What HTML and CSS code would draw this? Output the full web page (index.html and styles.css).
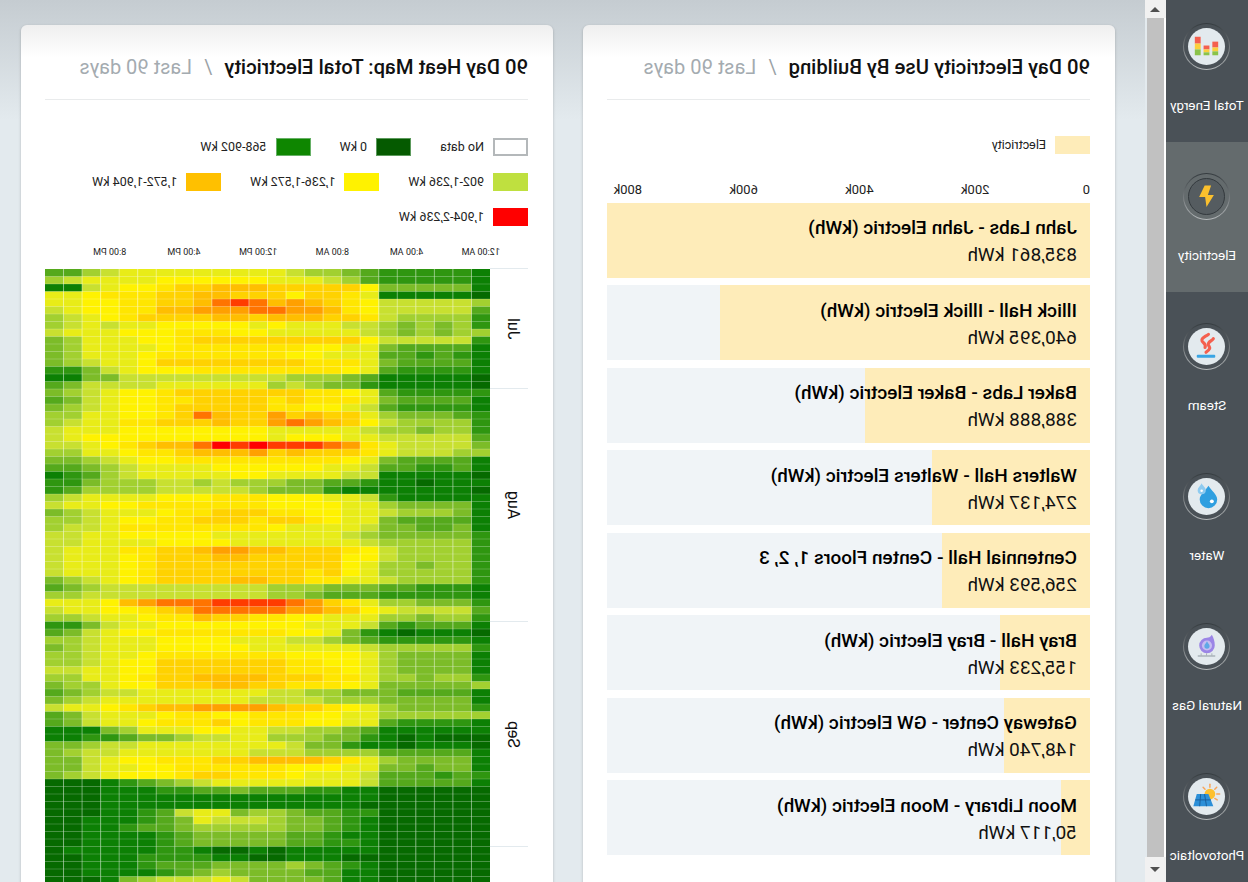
FILE: index.html
```html
<!DOCTYPE html>
<html lang="en">
<head>
<meta charset="utf-8">
<title>Energy dashboard</title>
<link rel="stylesheet" href="styles.css">
</head>
<body>
<div class="app">
  <aside class="sidebar">
    <a class="nav-item first">
      <span class="ring"><span class="ring-gap"><span class="disc">
        <svg class="icon" viewBox="0 0 38 38">
          <rect x="25" y="9" width="6" height="7" fill="#f4604f"/><rect x="25" y="16" width="6" height="6" fill="#fcd03c"/><rect x="25" y="22" width="6" height="6" fill="#8bc34a"/>
          <rect x="16" y="18" width="6" height="4" fill="#f4604f"/><rect x="16" y="22" width="6" height="3" fill="#fcd03c"/><rect x="16" y="25" width="6" height="3" fill="#8bc34a"/>
          <rect x="7" y="14" width="6" height="6" fill="#f4604f"/><rect x="7" y="20" width="6" height="4" fill="#fcd03c"/><rect x="7" y="24" width="6" height="4" fill="#8bc34a"/>
        </svg>
      </span></span></span>
      <span class="nav-label">Total Energy</span>
    </a>
    <a class="nav-item active">
      <span class="ring"><span class="ring-gap"><span class="disc">
        <svg class="icon" viewBox="0 0 38 38">
          <polygon points="21,7 27,19.500 20.500,19.500 19,30.500 11,17.500 17.500,17.500 14,7" fill="#fbc02d"/>
        </svg>
      </span></span></span>
      <span class="nav-label">Electricity</span>
    </a>
    <a class="nav-item">
      <span class="ring"><span class="ring-gap"><span class="disc">
        <svg class="icon" viewBox="0 0 38 38">
          <path d="M17 6.500C20 9 25 10 23.500 13.500C22.500 15.500 19 16 20.500 20" fill="none" stroke="#f4604f" stroke-width="3.200" stroke-linecap="round"/>
          <path d="M12 11C13.500 13.500 18 14 17 17.500C16 20 13.500 20.500 19.500 25" fill="none" stroke="#f4604f" stroke-width="3.200" stroke-linecap="round"/>
          <rect x="10" y="27.500" width="19" height="3" rx="1" fill="#3aa5e4"/>
        </svg>
      </span></span></span>
      <span class="nav-label">Steam</span>
    </a>
    <a class="nav-item">
      <span class="ring"><span class="ring-gap"><span class="disc">
        <svg class="icon" viewBox="0 0 38 38">
          <path d="M17 8C14 13 8 17 8 22a9 9 0 0 0 18 0C26 17 20 13 17 8Z" fill="#2f9fe0"/>
          <circle cx="13.500" cy="24" r="2" fill="#fff"/>
          <path d="M24 5.500C23 8 19.700 10 19.700 12.500a4.200 4.200 0 0 0 8.400 0C28.100 10 25 8 24 5.500Z" fill="#8ecbf0"/>
          <circle cx="24" cy="13" r="1.300" fill="#fff"/>
        </svg>
      </span></span></span>
      <span class="nav-label">Water</span>
    </a>
    <a class="nav-item">
      <span class="ring"><span class="ring-gap"><span class="disc">
        <svg class="icon" viewBox="0 0 38 38">
          <path d="M13.500 7C15 9.500 17 10 18.500 10A8 8 0 1 1 10.500 18C10.500 14 11.500 10.500 13.500 7Z" fill="#9b85e6"/>
          <circle cx="18.500" cy="18" r="5.200" fill="#c6bdf1"/>
          <path d="M18.500 13.500C17.800 15.500 15.800 16.500 15.800 18.500a2.700 2.700 0 0 0 5.400 0C21.200 16.500 19.200 15.500 18.500 13.500Z" fill="#5fa8e6"/>
          <rect x="10" y="28" width="18" height="1.500" fill="#a9b2b8"/>
          <rect x="13" y="26" width="1" height="2.500" fill="#a9b2b8"/><rect x="18.500" y="26" width="1" height="2.500" fill="#a9b2b8"/><rect x="24" y="26" width="1" height="2.500" fill="#a9b2b8"/>
        </svg>
      </span></span></span>
      <span class="nav-label">Natural Gas</span>
    </a>
    <a class="nav-item">
      <span class="ring"><span class="ring-gap"><span class="disc">
        <svg class="icon" viewBox="0 0 38 38">
          <g stroke="#f8a55a" stroke-width="1.500" stroke-linecap="round">
            <path d="M15.500 6.500V9.500"/><path d="M8.500 9.500L10.500 11.500"/><path d="M5.500 16.500H8.500"/><path d="M8 22.500L10.500 21"/><path d="M22.500 9.500L20.500 11.500"/>
          </g>
          <circle cx="15.500" cy="16.500" r="5.500" fill="#fdc02d"/>
          <polygon points="17,16.500 29,16.500 32.500,29 12,29" fill="#2b8fd8"/>
          <g stroke="#185f9c" stroke-width="1" fill="none">
            <path d="M14.500 22.500H30.500"/><path d="M21 16.500L19 29"/><path d="M25 16.500L26 29"/>
          </g>
        </svg>
      </span></span></span>
      <span class="nav-label">Photovoltaic</span>
    </a>
  </aside>

  <div class="scrollbar">
    <div class="sb-btn sb-up"><span class="arrow-up"></span></div>
    <div class="sb-track"><div class="sb-white"></div><div class="sb-thumb"></div></div>
    <div class="sb-btn sb-down"><span class="arrow-down"></span></div>
  </div>

  <main class="main">
    <section class="card">
      <header class="card-head">
        <h2 class="card-title">90 Day Electricity Use By Building</h2>
        <span class="sep">/</span>
        <span class="sub">Last 90 days</span>
      </header>
      <div class="legend-single"><span class="swatch bar-swatch"></span><span class="legend-text">Electricity</span></div>
      <div class="axis">
        <span class="tick tick-zero">0</span><span class="tick">200k</span><span class="tick">400k</span><span class="tick">600k</span><span class="tick">800k</span>
      </div>
      <div class="bars">
        <div class="bar"><div class="fill" style="width:100%"></div><div class="bar-text"><div class="bar-name">Jahn Labs - Jahn Electric (kWh)</div><div class="bar-val">835,861 kWh</div></div></div>
        <div class="bar"><div class="fill" style="width:76.61%"></div><div class="bar-text"><div class="bar-name">Illick Hall - Illick Electric (kWh)</div><div class="bar-val">640,395 kWh</div></div></div>
        <div class="bar"><div class="fill" style="width:46.52%"></div><div class="bar-text"><div class="bar-name">Baker Labs - Baker Electric (kWh)</div><div class="bar-val">388,888 kWh</div></div></div>
        <div class="bar"><div class="fill" style="width:32.8%"></div><div class="bar-text"><div class="bar-name">Walters Hall - Walters Electric (kWh)</div><div class="bar-val">274,137 kWh</div></div></div>
        <div class="bar"><div class="fill" style="width:30.7%"></div><div class="bar-text"><div class="bar-name">Centennial Hall - Centen Floors 1, 2, 3</div><div class="bar-val">256,593 kWh</div></div></div>
        <div class="bar"><div class="fill" style="width:18.57%"></div><div class="bar-text"><div class="bar-name">Bray Hall - Bray Electric (kWh)</div><div class="bar-val">155,233 kWh</div></div></div>
        <div class="bar"><div class="fill" style="width:17.79%"></div><div class="bar-text"><div class="bar-name">Gateway Center - GW Electric (kWh)</div><div class="bar-val">148,740 kWh</div></div></div>
        <div class="bar"><div class="fill" style="width:6%"></div><div class="bar-text"><div class="bar-name">Moon Library - Moon Electric (kWh)</div><div class="bar-val">50,117 kWh</div></div></div>
      </div>
    </section>

    <section class="card">
      <header class="card-head">
        <h2 class="card-title">90 Day Heat Map: Total Electricity</h2>
        <span class="sep">/</span>
        <span class="sub">Last 90 days</span>
      </header>
      <div class="legend">
        <div class="legend-row">
          <div class="legend-item"><span class="swatch s-none"></span><span class="legend-text">No data</span></div>
          <div class="legend-item"><span class="swatch s-zero"></span><span class="legend-text">0 kW</span></div>
          <div class="legend-item"><span class="swatch s-low"></span><span class="legend-text">568-902 kW</span></div>
        </div>
        <div class="legend-row">
          <div class="legend-item"><span class="swatch s-mid"></span><span class="legend-text">902-1,236 kW</span></div>
          <div class="legend-item"><span class="swatch s-yellow"></span><span class="legend-text">1,236-1,572 kW</span></div>
          <div class="legend-item"><span class="swatch s-amber"></span><span class="legend-text">1,572-1,904 kW</span></div>
        </div>
        <div class="legend-row">
          <div class="legend-item"><span class="swatch s-red"></span><span class="legend-text">1,904-2,236 kW</span></div>
        </div>
      </div>
      <div class="time-axis">
        <span class="time">12:00 AM</span><span class="time">4:00 AM</span><span class="time">8:00 AM</span><span class="time">12:00 PM</span><span class="time">4:00 PM</span><span class="time">8:00 PM</span>
      </div>
      <div class="heat-wrap">
        <div class="months">
          <div class="month m-jul"><span class="month-name">Jul</span></div>
          <div class="month m-aug"><span class="month-name">Aug</span></div>
          <div class="month m-sep"><span class="month-name">Sep</span></div>
          <div class="month m-oct"></div>
        </div>
        <svg id="heat" class="heat" width="445" height="615" viewBox="0 0 445 615"></svg>
      </div>
    </section>
  </main>
</div>
<script src="app.js"></script>
</body>
</html>
```

FILE: styles.css
```css
* { box-sizing: border-box; }
html, body { margin: 0; padding: 0; width: 1248px; height: 882px; overflow: hidden; background: #fff; }
body { font-family: Roboto, "Liberation Sans", sans-serif; color: #111; }

.app { display: flex; width: 1248px; height: 882px; overflow: hidden; transform: scaleX(-1); }

/* sidebar */
.sidebar { flex: 0 0 82px; background: #4a5157; color: #fff; }
.nav-item { display: flex; flex-direction: column; align-items: center; height: 150px; padding-top: 31px; }
.nav-item.first { height: 142px; padding-top: 23px; }
.nav-item.active { background: #646b6d; }
.ring { display: block; width: 47px; height: 47px; border-radius: 50%; padding: 1px; background: linear-gradient(#343a3e, #b6babc); }
.ring-gap { display: block; width: 45px; height: 45px; border-radius: 50%; padding: 4px; background: #4a5157; }
.disc { display: block; width: 37px; height: 37px; border-radius: 50%; background: #e3eaee; }
.active .ring-gap { background: #646b6d; }
.active .disc { background: #555c60; border: 1px solid #33393d; }
.icon { display: block; width: 100%; height: 100%; }
.nav-label { margin-top: 28px; font-size: 13.400px; line-height: 16px; white-space: nowrap; }

/* scrollbar */
.scrollbar { flex: 0 0 21px; display: flex; flex-direction: column; background: #e3eaee; }
.sb-btn { flex: 0 0 auto; background: #f1f1f1; display: flex; align-items: center; justify-content: center; }
.sb-up { height: 18px; }
.sb-down { height: 25px; }
.sb-track { flex: 1; display: flex; }
.sb-white { width: 2px; background: #fff; }
.sb-thumb { width: 17px; background: #c1c1c1; }
.arrow-up { width: 0; height: 0; border-left: 5px solid transparent; border-right: 5px solid transparent; border-bottom: 5px solid #505050; }
.arrow-down { width: 0; height: 0; border-left: 5px solid transparent; border-right: 5px solid transparent; border-top: 5px solid #505050; }

/* main */
.main { flex: 1; display: flex; gap: 30px; padding: 25px 21px 0 30px; background: linear-gradient(#c5ccd1 0, #e3eaee 120px); min-width: 0; }
.card { flex: 0 0 532px; min-width: 0; height: 900px; padding: 0 24px 0 25px; border-radius: 6px; background: linear-gradient(#efefef 0, #fff 32px); box-shadow: 0 1px 3px rgba(0, 0, 0, .22); }
.card-head { display: flex; align-items: center; height: 75px; padding-top: 10px; border-bottom: 1px solid #e9ebec; }
.card-title { margin: 0; font-size: 20.200px; font-weight: 500; line-height: 24px; color: #111; white-space: nowrap; }
.sep { margin: 0 12px; font-size: 20px; color: #9aa1a6; }
.sub { font-size: 20px; color: #a4abb0; white-space: nowrap; }

/* bar chart */
.legend-single { display: flex; align-items: center; gap: 9px; height: 18px; margin-top: 36px; }
.bar-swatch { background: #feecb9; }
.swatch { display: block; flex: 0 0 35px; width: 35px; height: 18px; }
.legend-text { font-size: 12.500px; line-height: 18px; white-space: nowrap; color: #222; }
.axis { display: flex; margin-top: 28px; height: 20.500px; font-size: 13px; line-height: 16px; color: #222; }
.tick { flex: 0 0 115.800px; text-align: center; }
.tick-zero { flex: 0 0 56.900px; text-align: left; }
.bars { display: flex; flex-direction: column; gap: 7.500px; }
.bar { position: relative; height: 75px; background: #f0f4f7; }
.fill { position: absolute; top: 0; bottom: 0; left: 0; background: #feecb9; }
.bar-text { position: relative; padding: 13.500px 13px 0; }
.bar-name { font-size: 19px; font-weight: 500; line-height: 24px; white-space: nowrap; color: #000; }
.bar-val { margin-top: 3px; font-size: 19px; line-height: 24px; white-space: nowrap; color: #111; }

/* heat map */
.legend { margin-top: 38px; display: flex; flex-direction: column; gap: 17px; }
.legend-row { display: flex; gap: 29px; height: 18px; }
.legend-item { display: flex; align-items: center; gap: 9px; }
.s-none { background: #fff; border: 2px solid #b4b8ba; }
.s-zero { background: #055a00; border: 1px solid #5c9a5c; }
.s-low { background: #0e8600; border: 1px solid #66b066; }
.s-mid { background: #bfe03f; }
.s-yellow { background: #fff200; }
.s-amber { background: #ffc000; }
.s-red { background: #ff0000; }
.time-axis { display: flex; margin: 18px 0 0 10.200px; height: 25px; }
.time { flex: 0 0 74.200px; text-align: center; font-size: 9px; line-height: 16px; color: #222; white-space: nowrap; }
.heat-wrap { display: flex; align-items: flex-start; }
.months { flex: 0 0 38px; display: flex; flex-direction: column; border-top: 1px solid #e3eaee; margin-top: -1px; }
.month { display: flex; align-items: center; justify-content: flex-start; padding-left: 6px; border-bottom: 1px solid #e3eaee; }
.m-jul { height: 120px; }
.m-aug { height: 233px; }
.m-sep { height: 225px; }
.m-oct { height: 60px; border-bottom: 0; }
.month-name { writing-mode: vertical-rl; transform: rotate(180deg); font-size: 16px; line-height: 18px; color: #111; }
.heat { display: block; flex: 0 0 445px; }
.cell-line-v { stroke: rgba(255, 255, 255, .45); stroke-width: 1; }
.cell-line-h { stroke: rgba(255, 255, 255, .2); stroke-width: 1; }
```

FILE: app.js
```js
// Rows are written as seen left-to-right in the reference, so hour 23 first.
var rows = [
"3356777777777"+"65543"+"222221","5677778888887"+"77653"+"222221","1167889aabbba"+"aaaa8"+"444441",
"778999aabbaaa"+"8aa97"+"111110","778899aabdedb"+"cba98"+"666665","678899bbcccdd"+"ccb98"+"666663",
"56789aaaabbab"+"bbaa9"+"655552","5676778888878"+"77766"+"545452","6777888999887"+"77776"+"545455",
"45777889aaaaa"+"aaaa8"+"666662","4577778999999"+"98877"+"433331","4577789999999"+"88777"+"332321",
"456778aaaaaaa"+"a9997"+"433331","2246788899999"+"99987"+"322221","1144666666666"+"55543"+"111110",
"3466667777775"+"65442"+"111110","4567889aaaaaa"+"a9987"+"322222","34678899aaaa9"+"a9997"+"433331",
"4567889aaaaa9"+"98876"+"322221","5577889adbaac"+"abaa7"+"544432","567799aaabaac"+"dcba8"+"655552",
"6777888888887"+"77776"+"554552","6788888888887"+"88877"+"666663","66789abbdfefe"+"eedc9"+"766664",
"5577899abbbca"+"baaa9"+"766655","4456788999999"+"99987"+"433331","3345677778888"+"88776"+"332231",
"1235677777887"+"77766"+"111110","2245556656555"+"44332"+"110111","2355556666654"+"44211"+"111110",
"5677778889998"+"88776"+"211111","6778899999998"+"88877"+"544441","456777899aaa9"+"98877"+"655541",
"55678899aaa9a"+"a9877"+"433331","5667999999998"+"77776"+"443341","6677888887777"+"77765"+"444442",
"6677778888777"+"77776"+"555552","677799aabccbb"+"aaa98"+"655552","677789aaabbaa"+"aaa88"+"655552",
"677789aaaaaaa"+"aaa87"+"554552","677789aaaaaaa"+"a9a87"+"555552","456789aaaabba"+"a9977"+"655552",
"3456666666665"+"55444"+"332221","5566666666665"+"54333"+"222221","7778bcdddeeee"+"dca97"+"554442",
"677889abddddd"+"ccba8"+"766663","55677899baa99"+"88777"+"554552","2246778888888"+"87776"+"323331",
"3467889999999"+"88742"+"101110","5567778888777"+"66543"+"222221","4567778888877"+"77776"+"555552",
"5567789999999"+"88887"+"544441","556788aaaaaaa"+"99887"+"544441","667788aaaaaaa"+"99987"+"544441",
"557789aabbbba"+"aa997"+"554552","455788aaabbaa"+"99987"+"444445","3456677777776"+"65544"+"433331",
"4567777777766"+"66555"+"444441","67789abbccccb"+"aa987"+"544442","3467778998899"+"98877"+"555555",
"346778999a899"+"98877"+"322221","1114577788776"+"65543"+"111111","1122344566775"+"55442"+"101000",
"4456677777777"+"64421"+"101110","4566777777766"+"65555"+"333331","446788999aabb"+"bba97"+"544441",
"4467788999999"+"88877"+"443441","45678889aa999"+"87776"+"333232","0001234567777"+"77776"+"333331",
"0001112233433"+"32211"+"000000","0001111111111"+"11111"+"000000","0001111111111"+"11110"+"000000",
"0001123677455"+"43322"+"000000","0011123476665"+"44321"+"000000","0011233455555"+"44321"+"000000",
"0011112344444"+"33211"+"000000","0011112344444"+"33221"+"000000","0111112210010"+"11111"+"000000",
"0011122221100"+"11100"+"000000","0011123334444"+"54321"+"000000","0011112345444"+"43311"+"000000",
"0001456667644"+"44311"+"000000"
];
var scale = {
  "0":"#066a00","1":"#0c8004","2":"#2f9610","3":"#55a91c","4":"#7cbc28","5":"#a2d030","6":"#c8e030",
  "7":"#e8ec18","8":"#fff200","9":"#ffe600","a":"#ffd200","b":"#ffbe00","c":"#ffa000","d":"#ff7400",
  "e":"#ff3c00","f":"#ff0000"
};
var NS = "http://www.w3.org/2000/svg";
var svg = document.getElementById("heat");
var cw = 445 / 24, ch = 7.5;
function add(tag, attrs) {
  var el = document.createElementNS(NS, tag);
  for (var k in attrs) el.setAttribute(k, attrs[k]);
  svg.appendChild(el);
}
rows.forEach(function (row, r) {
  row.split("").reverse().forEach(function (v, c) {
    add("rect", { x: c * cw, y: r * ch, width: cw + 0.3, height: ch + 0.3, fill: scale[v] });
  });
});
for (var r = 1; r < rows.length; r++) add("line", { "class": "cell-line-h", x1: 0, x2: 445, y1: r * ch, y2: r * ch });
for (var c = 1; c < 24; c++) add("line", { "class": "cell-line-v", x1: c * cw, x2: c * cw, y1: 0, y2: 615 });
```
